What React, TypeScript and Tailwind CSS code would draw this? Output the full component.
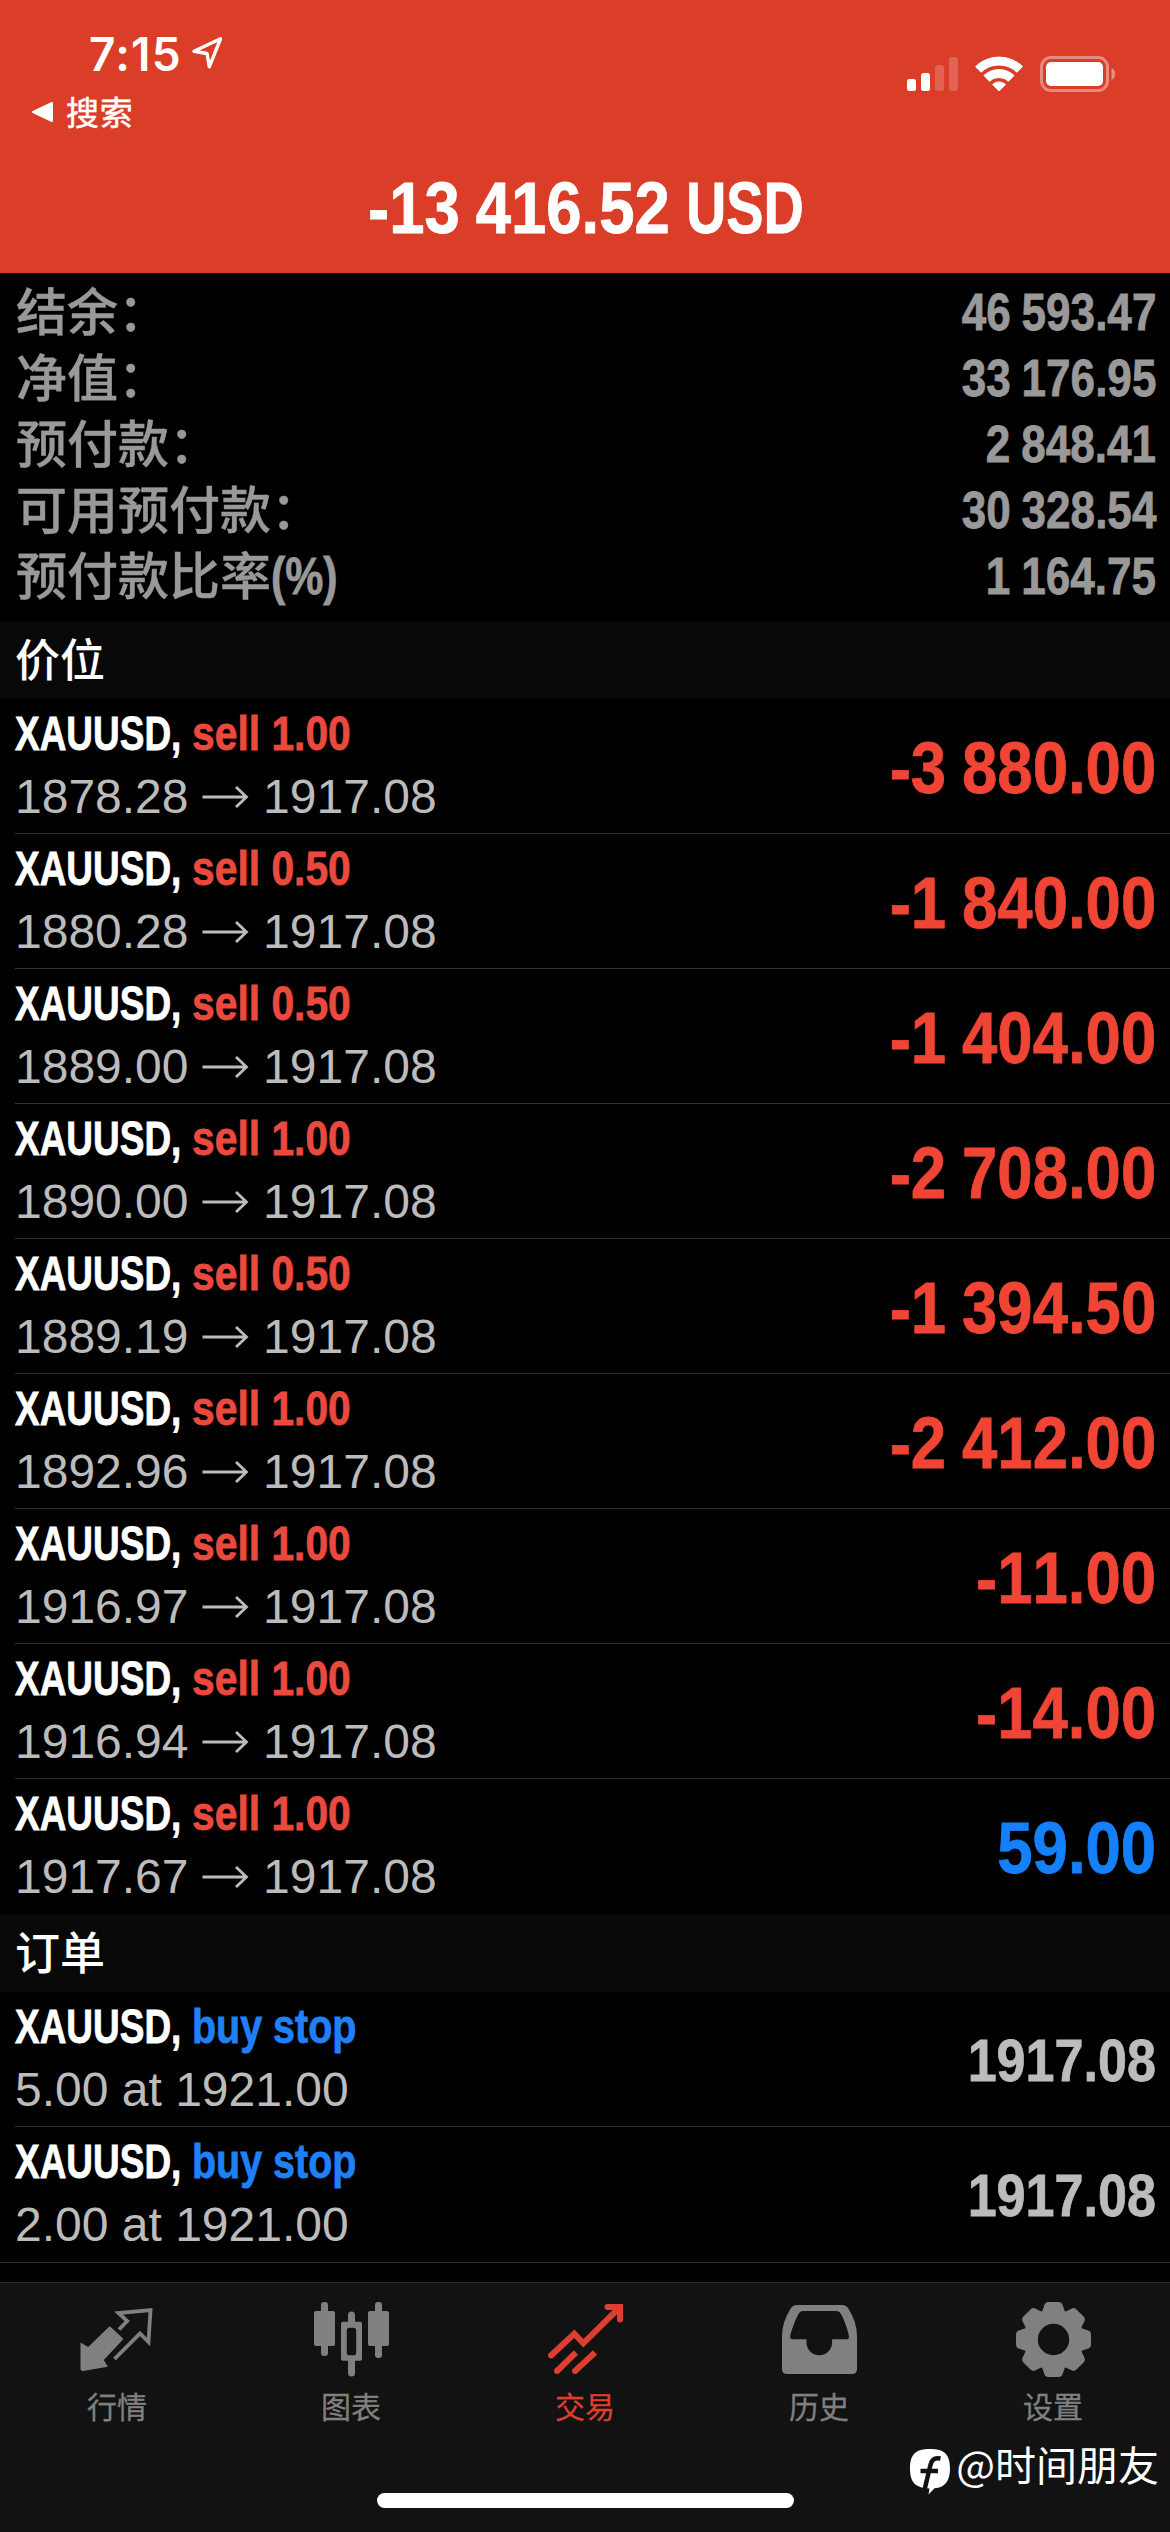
import { JSX, ReactNode } from 'react'

type Position = { side: string; open: string; profit: string }

const summary = [
  { label: '结余：', value: '46 593.47' },
  { label: '净值：', value: '33 176.95' },
  { label: '预付款：', value: '2 848.41' },
  { label: '可用预付款：', value: '30 328.54' },
  { label: '预付款比率', unit: '(%)', value: '1 164.75' },
]

const positions: Position[] = [
  { side: 'sell 1.00', open: '1878.28', profit: '-3 880.00' },
  { side: 'sell 0.50', open: '1880.28', profit: '-1 840.00' },
  { side: 'sell 0.50', open: '1889.00', profit: '-1 404.00' },
  { side: 'sell 1.00', open: '1890.00', profit: '-2 708.00' },
  { side: 'sell 0.50', open: '1889.19', profit: '-1 394.50' },
  { side: 'sell 1.00', open: '1892.96', profit: '-2 412.00' },
  { side: 'sell 1.00', open: '1916.97', profit: '-11.00' },
  { side: 'sell 1.00', open: '1916.94', profit: '-14.00' },
  { side: 'sell 1.00', open: '1917.67', profit: '59.00' },
]

const orders = [
  { side: 'buy stop', detail: '5.00 at 1921.00', price: '1917.08' },
  { side: 'buy stop', detail: '2.00 at 1921.00', price: '1917.08' },
]

// condensed look: bold sans squeezed horizontally with scale-x
const bold = "font-['Liberation_Sans',sans-serif] font-bold [font-kerning:none] [-webkit-text-stroke:0.8px]"
const cjk = "font-['Noto_Sans_CJK_SC',sans-serif]"

function StatusBar() {
  return (
    <div className="flex h-[92px] justify-between pl-[89px] pr-[54px] pt-[28px]">
      <div className="flex items-start">
        <span className="w-[90px] font-['Inter',sans-serif] text-[46px] font-semibold leading-[52px] tracking-[1.2px]">7:15</span>
        <svg className="ml-[12px] mt-[7px] h-[36px] w-[34px]" viewBox="0 0 34 36" fill="none" stroke="currentColor" strokeWidth="3.400" strokeLinejoin="round">
          <path d="M29.500 3.800 3 16.300 16 18.500 18.300 31.800Z" />
        </svg>
      </div>
      <svg className="mt-[27px] h-[38px] w-[209px]" viewBox="0 0 209 38" fill="currentColor">
        {/* signal */}
        <rect x="0" y="24" width="9" height="12" rx="2.500" />
        <rect x="14" y="18" width="9" height="18" rx="2.500" />
        <rect x="28" y="10" width="9" height="26" rx="2.500" opacity="0.2" />
        <rect x="42" y="2" width="9" height="34" rx="2.500" opacity="0.2" />
        {/* wifi */}
        <path d="M68.500 11.500a34 34 0 0 1 47 0l-5.500 5.700a26 26 0 0 0-36 0Z" stroke="currentColor" strokeLinejoin="round" />
        <path d="M77 20.500a22 22 0 0 1 30 0l-5.500 5.700a14 14 0 0 0-19 0Z" stroke="currentColor" strokeLinejoin="round" />
        <path d="M85.500 29.500a9.500 9.500 0 0 1 13 0L92 36Z" stroke="currentColor" strokeLinejoin="round" />
        {/* battery */}
        <rect x="134.500" y="2.500" width="66" height="33" rx="9.500" fill="none" stroke="currentColor" strokeWidth="3" opacity="0.4" />
        <rect x="139" y="7" width="57" height="24" rx="5" />
        <path d="M204.500 13c5 1.500 5 10.500 0 12Z" opacity="0.4" />
      </svg>
    </div>
  )
}

function Header() {
  return (
    <header className="h-[273px] bg-[#da3d28] text-white">
      <StatusBar />
      <div className="flex h-[40px] items-center pl-[31px]">
        <svg className="h-[22px] w-[23px]" viewBox="0 0 23 22" fill="currentColor" stroke="currentColor" strokeWidth="2" strokeLinejoin="round">
          <path d="M2 11 21 2v18Z" />
        </svg>
        <span className={`${cjk} mb-[3px] ml-[12px] text-[33px] leading-[38px] tracking-[0.8px] [-webkit-text-stroke:0.5px]`}>搜索</span>
      </div>
      <div className={`${bold} flex h-[132px] justify-center whitespace-pre pt-[32px] text-[72px] leading-[88px]`}>
        <span className="w-[318px] origin-left scale-x-[0.882] [word-spacing:-2px]">-13 416.52</span>
        <span className="w-[117px] origin-left scale-x-[0.775]">USD</span>
      </div>
    </header>
  )
}

function SectionTitle({ children }: { children: ReactNode }) {
  return (
    <h2 className={`${cjk} flex h-[78px] items-center bg-[#080808] pb-[5px] pl-[15px] text-[45px] font-medium leading-[66px] text-white`}>
      {children}
    </h2>
  )
}

function Arrow() {
  return (
    <svg className="ml-[12px] mr-[14.6px] h-[24px] w-[48px]" viewBox="0 0 48 24" fill="none" stroke="currentColor" strokeWidth="2.800">
      <path d="M1.500 12h44M35 2l10.500 10L35 22" />
    </svg>
  )
}

type RowProps = {
  side: ReactNode
  detail: ReactNode
  amount: ReactNode
  last?: boolean
}

function Row({ side, detail, amount, last }: RowProps) {
  return (
    <li className={`ml-[15px] flex h-[135px] justify-between border-b pr-[14px] ${last ? 'border-transparent' : 'border-[#303030]'}`}>
      <div className="pt-[3px]">
        <div className={`${bold} flex whitespace-pre text-[48px] leading-[63px]`}>
          <span className="w-[177px] origin-left scale-x-[0.77] text-white">XAUUSD,</span>
          {side}
        </div>
        <div className="flex items-center font-['Liberation_Sans',sans-serif] text-[48px] leading-[63px] text-[#bcbcbc] [font-kerning:none]">
          {detail}
        </div>
      </div>
      <div className="flex items-center pt-[4px]">{amount}</div>
    </li>
  )
}

const QuotesIcon = (
  <>
    <path d="M.5 40.500 8.200 45 28.500 25.200Q29.800 24 31 25.200L42.500 36Q43.500 37 42.500 38L23.800 58l4 6.700L3 69Q.5 69 .5 66.500Z" fill="currentColor" />
    <path d="M39 27.500 47.200 19 38.500 11 70.500 8 68.500 40 60 31.500 34.500 57" fill="none" stroke="currentColor" strokeWidth="3.800" />
  </>
)

const ChartIcon = (
  <g fill="currentColor">
    <rect x="0" y="9" width="21" height="35" rx="2" />
    <rect x="7" y="0" width="7" height="54" rx="3" />
    <path fillRule="evenodd" d="M29 19.700h17q2 0 2 2v35q0 2-2 2H29q-2 0-2-2v-35q0-2 2-2ZM35.500 25.700q-2.700 0-2.700 2.500v22.500q0 2.600 2.700 2.600h4q2.700 0 2.700-2.600V28.200q0-2.500-2.700-2.500Z" />
    <path d="M34 22v-9a3.500 3.500 0 0 1 7 0v9ZM34 57v14a3.500 3.500 0 0 0 7 0V57Z" />
    <rect x="54" y="9" width="21" height="35" rx="2" />
    <rect x="61" y="0" width="7" height="56" rx="3" />
  </g>
)

const TradeIcon = (
  <g fill="none" stroke="currentColor" strokeWidth="6">
    <path d="M3 53.500 26.300 31.800 35.300 41.300 71 6" strokeLinejoin="miter" />
    <path d="M59.500 5H72v12.500" strokeLinecap="round" />
    <path d="M9 69 28 50.500M27 69 47 50.500" />
    <g fill="currentColor" stroke="none">
      <circle cx="3" cy="53.500" r="3" />
      <circle cx="9" cy="69" r="3" />
      <circle cx="27" cy="69" r="3" />
    </g>
  </g>
)

const HistoryIcon = (
  <path
    fill="currentColor"
    fillRule="evenodd"
    d="M0 34Q0 20 9 6Q11 3 15 3H60Q64 3 66 6Q75 20 75 34V67Q75 72 70 72H5Q0 72 0 67ZM21 9Q18 9 16.500 12Q12 20 8.300 33Q7.500 37.300 10.500 37.300H24.500V40.500A12.800 12.800 0 0 0 50.100 40.500V37.300H64.500Q67.800 37.300 66.800 33Q63.500 20 59 12Q57.500 9 54 9Z"
  />
)

const SettingsIcon = (
  <g fill="currentColor" transform="translate(37.5 37.5)">
    <circle r="22.500" fill="none" stroke="currentColor" strokeWidth="13.600" />
    {[0, 45, 90, 135, 180, 225, 270, 315].map(a => (
      <path key={a} transform={`rotate(${a})`} d="M-13-25.500Q-11-28-9.300-34Q-8.300-37.500-5-37.500H5Q8.300-37.500 9.300-34Q11-28 13-25.500Z" />
    ))}
  </g>
)

const tabs = [
  { label: '行情', icon: QuotesIcon },
  { label: '图表', icon: ChartIcon },
  { label: '交易', icon: TradeIcon, active: true },
  { label: '历史', icon: HistoryIcon },
  { label: '设置', icon: SettingsIcon },
]

function TabBar() {
  return (
    <nav className="relative flex h-[250px] flex-col items-center justify-between border-t border-[#2c2c2c] bg-[#121212] pb-[24px]">
      <div className="flex w-full pt-[19px]">
        {tabs.map(tab => (
          <div key={tab.label} className={`flex flex-1 flex-col items-center ${tab.active ? 'text-[#dd3e2f]' : 'text-[#808080]'}`}>
            <svg className="h-[75px] w-[75px]" viewBox="0 0 75 75">{tab.icon}</svg>
            <span className={`${cjk} mt-[8px] text-[30px] leading-[40px] [-webkit-text-stroke:0.3px]`}>{tab.label}</span>
          </div>
        ))}
      </div>
      <div className="h-[15px] w-[417px] rounded-full bg-white" />
      <div className="absolute right-[11px] top-[148px] flex items-center text-white">
        <svg className="mt-[18px] h-[46px] w-[40px]" viewBox="0 0 40 46">
          <path fill="currentColor" d="M20 0C34 0 40 5 40 19.500C40 32 35 38.500 24.500 39.300L18.500 45.500L19.500 39.500C5 39 0 33 0 19.500C0 5 6 0 20 0Z" />
          <path fill="none" stroke="#121212" strokeWidth="4.500" d="M30.500 9.500C24.500 8.300 21.500 10.500 20.300 16.500L14.500 41M10.500 22H28" />
        </svg>
        <span className={`${cjk} ml-[6px] text-[41px] leading-[54px]`}>@时间朋友</span>
      </div>
    </nav>
  )
}

export default function App(): JSX.Element {
  return (
    <div className="flex h-[2532px] w-[1170px] flex-col overflow-hidden bg-black">
      <Header />

      <main className="flex-1">
        <dl className="h-[348px] pt-[3px] text-[#999999]">
          {summary.map(item => (
            <div key={item.label} className="flex h-[66px] justify-between pl-[16px] pr-[14px]">
              <dt className="flex">
                <span className={`${cjk} text-[51px] font-medium leading-[66px] [-webkit-text-stroke:0.4px]`}>{item.label}</span>
                {item.unit && (
                  <span className={`${bold} origin-left scale-x-[0.84] pt-[4px] text-[51px] leading-[66px]`}>{item.unit}</span>
                )}
              </dt>
              <dd className={`${bold} origin-right scale-x-[0.864] pt-[4px] text-[51px] leading-[66px] [word-spacing:-1.5px]`}>{item.value}</dd>
            </div>
          ))}
        </dl>

        <SectionTitle>价位</SectionTitle>
        <ul>
          {positions.map((p, i) => (
            <Row
              key={p.open}
              side={<span className="origin-left scale-x-[0.85] text-[#ea4a3e]">{p.side}</span>}
              last={i === positions.length - 1}
              detail={<>{p.open}<Arrow />1917.08</>}
              amount={
                <span className={`${bold} origin-right scale-x-[0.882] text-[72px] leading-[80px] [word-spacing:-2px] ${p.profit.startsWith('-') ? 'text-[#f04535]' : 'text-[#1480fb]'}`}>
                  {p.profit}
                </span>
              }
            />
          ))}
        </ul>

        <SectionTitle>订单</SectionTitle>
        <ul className="border-b border-[#303030]">
          {orders.map((o, i) => (
            <Row
              key={o.detail}
              side={<span className="origin-left scale-x-[0.822] text-[#2080f8]">{o.side}</span>}
              last={i === orders.length - 1}
              detail={o.detail}
              amount={
                <span className={`${bold} origin-right scale-x-[0.868] text-[60px] leading-[70px] text-[#bcbcbc]`}>{o.price}</span>
              }
            />
          ))}
        </ul>
      </main>

      <TabBar />
    </div>
  )
}
